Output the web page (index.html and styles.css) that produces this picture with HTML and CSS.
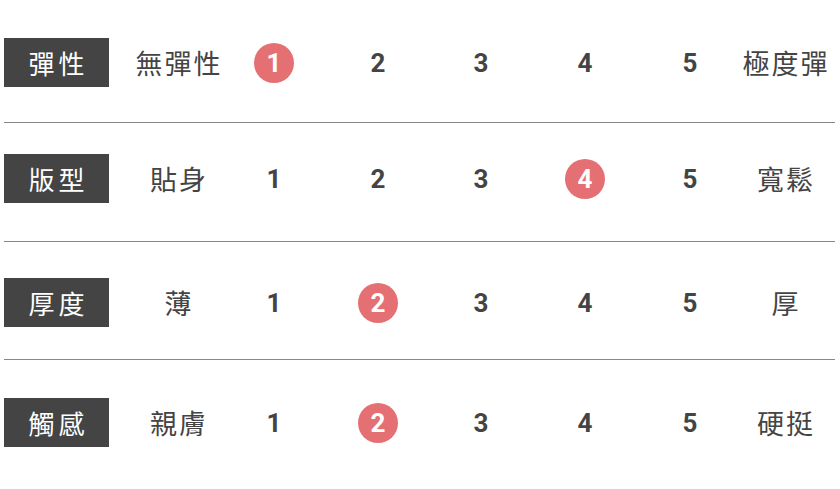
FILE: index.html
```html
<!DOCTYPE html>
<html lang="zh-Hant">
<head>
<meta charset="utf-8">
<link rel="stylesheet" href="styles.css">
</head>
<body>
<div class="table">
  <div class="row r1">
    <div class="tag">彈性</div>
    <div class="end">無彈性</div>
    <div class="num"><span class="dot">1</span></div>
    <div class="num">2</div>
    <div class="num">3</div>
    <div class="num">4</div>
    <div class="num">5</div>
    <div class="end">極度彈</div>
  </div>
  <div class="row r2">
    <div class="tag">版型</div>
    <div class="end">貼身</div>
    <div class="num">1</div>
    <div class="num">2</div>
    <div class="num">3</div>
    <div class="num"><span class="dot">4</span></div>
    <div class="num">5</div>
    <div class="end">寬鬆</div>
  </div>
  <div class="row r3">
    <div class="tag">厚度</div>
    <div class="end">薄</div>
    <div class="num">1</div>
    <div class="num"><span class="dot">2</span></div>
    <div class="num">3</div>
    <div class="num">4</div>
    <div class="num">5</div>
    <div class="end">厚</div>
  </div>
  <div class="row r4">
    <div class="tag">觸感</div>
    <div class="end">親膚</div>
    <div class="num">1</div>
    <div class="num"><span class="dot">2</span></div>
    <div class="num">3</div>
    <div class="num">4</div>
    <div class="num">5</div>
    <div class="end">硬挺</div>
  </div>
</div>
</body>
</html>
```

FILE: styles.css
```css
html, body {
  margin: 0;
  padding: 0;
  background: #ffffff;
}
body {
  padding: 4px 0 0 4px;
  font-family: "Noto Sans CJK TC", "Noto Sans", sans-serif;
  color: #444444;
}
.table {
  width: 831px;
}
.row {
  display: grid;
  grid-template-columns: 126px 96px 96px 112px 94px 114px 96px 94px;
  align-items: center;
  border-bottom: 1px solid #888888;
}
.r1 { padding: 34px 0 35px; }
.r2 { padding: 31px 0 38px; }
.r3 { padding: 36px 0 32px; }
.r4 { padding: 38px 0 0; border-bottom: none; }
.tag {
  width: 105px;
  height: 49px;
  background: #444444;
  color: #ffffff;
  font-size: 26px;
  font-weight: 400;
  letter-spacing: 4px;
  text-indent: 4px;
  display: flex;
  align-items: center;
  justify-content: center;
  line-height: 1;
}
.end {
  text-align: center;
  font-size: 27px;
  font-weight: 400;
  letter-spacing: 2px;
  text-indent: 2px;
  line-height: 1;
  white-space: nowrap;
}
.num {
  display: flex;
  justify-content: center;
  align-items: center;
  font-family: "Roboto", "Noto Sans", sans-serif;
  font-weight: 700;
  font-size: 26px;
  line-height: 1;
  height: 40px;
}
.dot {
  width: 40px;
  height: 40px;
  border-radius: 50%;
  background: #e57073;
  color: #ffffff;
  display: flex;
  align-items: center;
  justify-content: center;
}
```
